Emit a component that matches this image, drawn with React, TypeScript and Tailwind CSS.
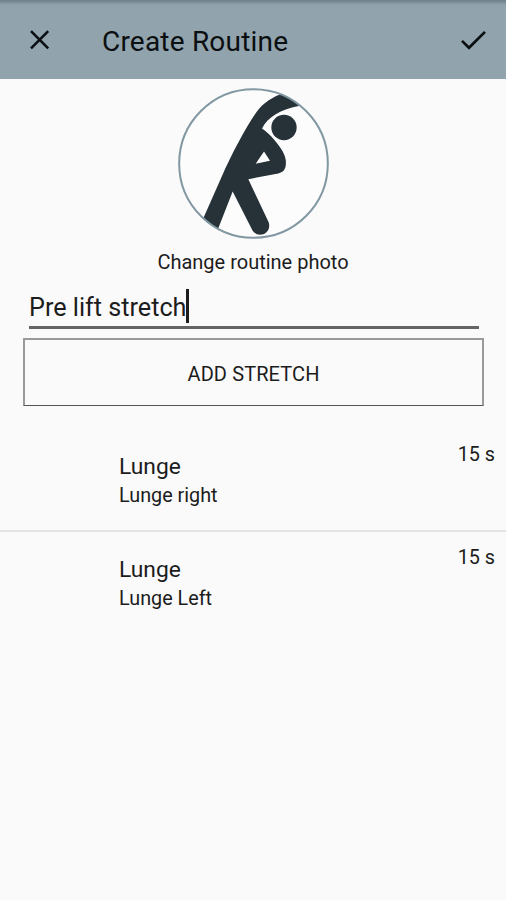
const stretches = [
  { name: 'Lunge', detail: 'Lunge right', duration: '15 s' },
  { name: 'Lunge', detail: 'Lunge Left', duration: '15 s' },
]

function Header() {
  return (
    <header className="flex h-[79px] items-center bg-[#91a3ac] bg-linear-to-b from-[#6c808a] to-[#91a3ac] to-[5px] pb-px text-[#0b0f11]">
      <button aria-label="Close" className="ml-[29px] flex-shrink-0">
        <svg className="h-[21px] w-[21px]" viewBox="0 0 21 21" fill="none" stroke="currentColor" strokeWidth="2.6">
          <path d="M2 2.2 19.2 19.4M19.2 2.2 2 19.4" />
        </svg>
      </button>
      <h1 className="ml-[52px] flex-1 pt-[5px] text-[28px] leading-none tracking-[0.2px] whitespace-nowrap">Create Routine</h1>
      <button aria-label="Save" className="mr-[20px] flex-shrink-0 pt-[2px]">
        <svg className="h-[20px] w-[26px]" viewBox="0 0 26 20" fill="none" stroke="currentColor" strokeWidth="2.7">
          <path d="M2 10.9 9 17.8 25 1.9" />
        </svg>
      </button>
    </header>
  )
}

function RoutinePhoto() {
  return (
    <svg className="block h-[151px] w-[151px]" viewBox="24 23.5 453 453">
      <clipPath id="photo">
        <circle cx="250.5" cy="250" r="224" />
      </clipPath>
      <circle cx="250.5" cy="250" r="223" fill="#fcfcfc" />
      <g clipPath="url(#photo)" fill="#263238">
        <circle cx="342" cy="142" r="38" />
        {/* Raised arm, torso and back leg */}
        <path d="M346 38C310 48 279 68 258 98C224 148 185 221 155 290L100 414L96 440L142 452L188 334L246 448C261 478 307 462 296 426L235 297L325 280C344 276 350 262 347 238C344 217 326 195 312 178C302 166 290 154 276 145C294 111 330 88 390 77L380 50Z" />
        {/* Gap between the bent arm and the body */}
        <path d="M282 214 257 251 300 242Z" fill="#fcfcfc" />
      </g>
      <circle cx="250.5" cy="250" r="223" fill="none" stroke="#8197a2" strokeWidth="6" />
    </svg>
  )
}

export default function App() {
  return (
    <div className="h-[900px] w-[506px] overflow-hidden bg-[#fafafa] font-['Roboto','Liberation_Sans',sans-serif] text-[#1c1c1c]">
      <Header />

      <main>
        <div className="flex flex-col items-center pt-[9px]">
          <RoutinePhoto />
          <p className="mt-[11px] text-[20px] leading-[24px]">Change routine photo</p>
        </div>

        {/* Routine name */}
        <div className="mr-[27px] ml-[29px] flex h-[55px] items-start border-b-3 border-[#646464] pt-[15px]">
          <span className="pt-[2px] text-[25.2px] leading-[34px] whitespace-nowrap">Pre lift stretch</span>
          <span className="h-[34px] w-[2.5px] bg-[#1c1c1c]" />
        </div>

        <button className="mt-[9px] ml-[23px] flex h-[68px] w-[461px] items-center justify-center border-2 border-b-1 border-[#9a9a9a] border-b-[#555555] pt-[2px] text-[20px] tracking-[0.1px]">
          ADD STRETCH
        </button>

        <ul className="mt-[23px]">
          {stretches.map((s) => (
            <li key={s.detail} className="flex h-[103px] justify-between border-b-2 border-[#e3e3e3] pr-[11px] pl-[119px] last:border-0">
              <div className="pt-[23px]">
                <p className="text-[22.8px] leading-[30px]">{s.name}</p>
                <p className="mt-px text-[19.8px] leading-[26px]">{s.detail}</p>
              </div>
              <span className="pt-[14px] text-[19.8px] leading-[24px]">{s.duration}</span>
            </li>
          ))}
        </ul>
      </main>
    </div>
  )
}
